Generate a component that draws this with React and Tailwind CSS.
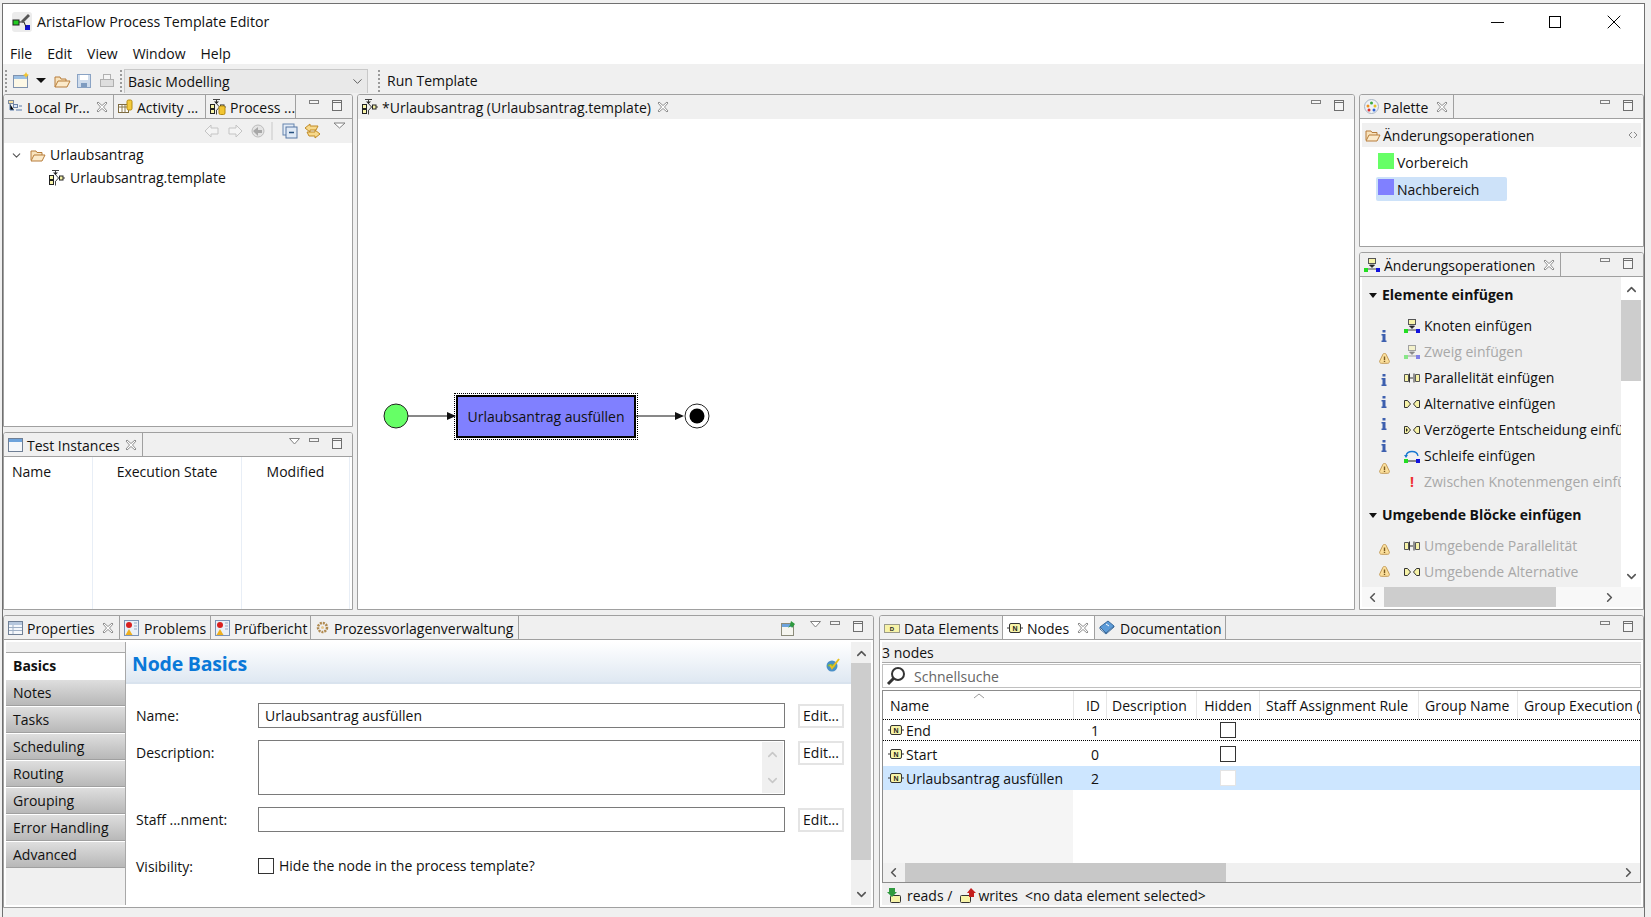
import { ChevronUp, ChevronDown, ChevronLeft, ChevronRight, Minus, X } from "lucide-react"

const COLS = ["w-[191px]", "w-[33px]", "w-[90px]", "w-[63px]", "w-[159px]", "w-[99px]", "flex-1"]

function CloseIcon() {
  return (
    <svg width="12" height="12" viewBox="0 0 12 12" className="shrink-0">
      <path d="M2 1l4 3.5L10 1l1 1-3.5 4L11 10l-1 1-4-3.5L2 11l-1-1 3.5-4L1 2z" fill="#fff" stroke="#8f8f8f" strokeWidth="1" />
    </svg>
  )
}

function MinIcon() {
  return <div className="h-[4px] w-[10px] border border-[#7f7f7f] bg-[#f5f5f5]" />
}

function MaxIcon() {
  return (
    <div className="h-[11px] w-[10px] border border-[#6f6f6f] bg-[#f5f5f5]">
      <div className="h-[2px] border-b border-[#6f6f6f]" />
    </div>
  )
}

function MenuArrow() {
  return (
    <svg width="11" height="7" viewBox="0 0 11 7" className="-mr-[4px]">
      <path d="M.5.5h10L5.500 6z" fill="#fff" stroke="#808080" />
    </svg>
  )
}

function NodeIcon() {
  return (
    <svg width="16" height="12" viewBox="0 0 16 12" className="shrink-0">
      <path d="M0 6h3M13 6h3" stroke="#333" />
      <rect x="2.500" y="1.500" width="11" height="9" rx="1.500" fill="#f7f3a8" stroke="#333" />
      <text x="8" y="9" textAnchor="middle" fontSize="7" fontWeight="700" fontFamily="Liberation Sans" fill="#222">N</text>
    </svg>
  )
}

function ProcIcon({ can }) {
  return (
    <svg width="16" height="16" viewBox="0 0 16 16" className="shrink-0">
      <path d="M3 .5h7M6.500 .5v3M6 4l3.500 4L6 12M6.500 12v3.500M9.500 8h1M14 8h2" stroke="#444" fill="none" />
      <path d="M4 2.500h5L6.500 5z" fill="#222" />
      <rect x=".5" y="5.500" width="4" height="4" fill="#f7f3a8" stroke="#222" />
      <rect x=".5" y="10.500" width="4" height="4" fill="#f7f3a8" stroke="#222" />
      <rect x="10.500" y="6" width="3.500" height="4" fill="#f7f3a8" stroke="#222" />
      {can && <rect x="9" y="7" width="6" height="8.500" rx="1.500" fill="#f2c531" stroke="#b58a10" />}
    </svg>
  )
}

function FolderIcon() {
  return (
    <svg width="16" height="13" viewBox="0 0 16 13" className="shrink-0">
      <path d="M1 11V2h5l1 1.500h5V6" fill="#f8e3bd" stroke="#b77d3a" />
      <path d="M1 12l3-6h11l-3 6z" fill="#fbeacb" stroke="#b77d3a" />
    </svg>
  )
}

function InsertIcon({ faded }) {
  return (
    <svg width="16" height="14" viewBox="0 0 16 14" className={`shrink-0 ${faded ? "opacity-50" : ""}`}>
      <rect x="4.500" y=".5" width="7" height="5" fill="#f7f3a8" stroke="#555" />
      <path d="M5.500 7h5L8 9.500zM3 11h10" fill="#222" stroke="#222" strokeWidth=".8" />
      <rect y="10" width="4" height="4" fill="#22dd22" />
      <rect x="12" y="10" width="4" height="4" fill="#1111dd" />
    </svg>
  )
}

function ParallelIcon() {
  return (
    <svg width="16" height="12" viewBox="0 0 16 12" className="shrink-0">
      <path d="M.5 2.500h4v7h-4zM15.500 2.500h-4v7h4z" fill="#f7f3a8" stroke="#555" />
      <path d="M5.500 1.500v9M10 1.500v9M6 6h3" stroke="#333" />
    </svg>
  )
}

function AltIcon({ dark }) {
  return (
    <svg width="16" height="12" viewBox="0 0 16 12" className="shrink-0">
      <path d="M.5 2.500h3l3 3.500-3 3.500h-3z" fill="#f7f3a8" stroke="#333" />
      <path d="M15.500 2.500h-3l-3 3.500 3 3.500h3z" fill="#f7f3a8" stroke="#333" />
      {dark && <path d="M2 4l2 2-2 2z" fill="#222" />}
    </svg>
  )
}

function LoopIcon() {
  return (
    <svg width="16" height="14" viewBox="0 0 16 14" className="shrink-0">
      <path d="M2 7C3 1 13 1 14 7" fill="none" stroke="#1878d0" strokeWidth="1.300" />
      <path d="M0 6h4L2 9z" fill="#1878d0" />
      <path d="M3 12h10" stroke="#222" />
      <rect y="10" width="4" height="4" fill="#22dd22" />
      <rect x="12" y="10" width="4" height="4" fill="#1111dd" />
    </svg>
  )
}

function InfoMark() {
  return (
    <svg width="6" height="12" viewBox="0 0 6 12">
      <path d="M1.500 0h3v2.500h-3zM.5 4h4v6.500h1V12H.5v-1.500h1V5.500h-1z" fill="#3d5fae" />
    </svg>
  )
}

function WarnMark() {
  return (
    <svg width="11" height="11" viewBox="0 0 11 11">
      <path d="M4 1.200a1.700 1.700 0 0 1 3 0l3.200 6.600c.6 1.200-.2 2.500-1.500 2.500H2.300C1 10.300.2 9 .8 7.800z" fill="#fbdf9c" stroke="#c39b58" />
      <path d="M4.800 3.500h1.400v3.500H4.800zM4.800 7.700h1.400v1.300H4.800z" fill="#7a5a20" />
    </svg>
  )
}

function ReportIcon() {
  return (
    <svg width="15" height="16" viewBox="0 0 15 16" className="shrink-0">
      <rect x=".5" y=".5" width="14" height="15" fill="#eaf0f8" stroke="#7b93b5" />
      <circle cx="5" cy="5" r="3" fill="#d92020" />
      <path d="M5 9l3.500 6h-7z" fill="#f0b020" />
      <path d="M10 3h3M10 6h3M10 9h3" stroke="#9aa9c0" />
    </svg>
  )
}

function PropIcon({ blue }) {
  return (
    <svg width="15" height="14" viewBox="0 0 15 14" className="shrink-0">
      <rect x=".5" y=".5" width="14" height="13" fill="#f4f7fb" stroke="#6f7f95" />
      <rect x="1" y="1" width="13" height="3" fill={blue ? "#6da3dc" : "#b6c7dd"} />
      {!blue && <path d="M1 6.500h13M1 9.500h13M5 4v9" stroke="#9fb0c6" />}
    </svg>
  )
}

function Tab({ icon, label, close, tone = "", w, bare }) {
  return (
    <div className={`flex h-full shrink-0 items-center gap-[4px] pl-[4px] ${bare ? "" : "border-r border-[#a0a0a0]"} ${w} ${tone}`}>
      {icon}
      <span className="translate-y-px whitespace-nowrap">{label}</span>
      {close && <div className="ml-auto mr-[5px]"><CloseIcon /></div>}
    </div>
  )
}

function Strip({ children, actions, line = true }) {
  return (
    <div className={`flex h-[24px] shrink-0 items-stretch bg-[#f0f0f0] ${line ? "border-b border-[#a0a0a0]" : ""}`}>
      {children}
      <div className="ml-auto flex items-start gap-[13px] pr-[10px] pt-[5px]">{actions}</div>
    </div>
  )
}

function Panel({ children, className }) {
  return <div className={`flex flex-col overflow-hidden rounded-t-[3px] border border-[#a0a0a0] bg-white ${className}`}>{children}</div>
}

function LeftPanels() {
  return (
    <div className="flex w-[350px] shrink-0 flex-col gap-[5px]">
      <Panel className="h-[333px]">
        <Strip actions={<><MinIcon /><MaxIcon /></>}>
          <Tab w="w-[110px]" close label="Local Pr..." icon={
            <svg width="15" height="13" viewBox="0 0 15 13" className="shrink-0">
              <rect x=".5" y=".5" width="5" height="3" fill="#f6dfa0" stroke="#7d8aa0" />
              <rect x="5.500" y="4.500" width="4" height="3" fill="#dfe8f4" stroke="#6d83a8" />
              <path d="M2 4v6h4M11 6h3M8 10h6" stroke="#5a7cab" />
            </svg>
          } />
          <Tab w="w-[92px]" label="Activity ..." icon={
            <svg width="15" height="15" viewBox="0 0 15 15" className="shrink-0">
              <rect x=".5" y="5.500" width="10" height="8" fill="#fff" stroke="#7d6a40" />
              <path d="M.5 8h10M4 5.500v8M7 5.500v8" stroke="#8a7a50" />
              <rect x="9" y="1" width="5" height="10" rx="1.500" fill="#f4cb3d" stroke="#b58a10" />
            </svg>
          } />
          <Tab w="w-[90px]" label="Process ..." icon={<ProcIcon can />} />
        </Strip>
        <div className="flex h-[24px] shrink-0 items-center justify-end bg-[#f0f0f0] pr-[7px]">
          <svg width="150" height="20" viewBox="0 0 150 20">
            <path d="M10 10l6-6v3h7v6h-7v3zM41 4l6 6-6 6v-3h-7v-6h7z" fill="#f4f4f4" stroke="#c4c4c4" />
            <circle cx="63" cy="10" r="6" fill="#e4e4e4" stroke="#bcbcbc" />
            <path d="M58 10l5-4v3h4v3h-4v3z" fill="#a8a8a8" />
            <path d="M77 1v18" stroke="#c8c8c8" />
            <rect x="88" y="3" width="11" height="11" fill="#e4ecf6" stroke="#6584ad" />
            <rect x="91" y="6" width="11" height="11" fill="#dfe9f5" stroke="#5677a3" />
            <path d="M94 11.500h5" stroke="#25507f" strokeWidth="1.500" />
            <path d="M110 7l5-4v2h8l-2 4h-6v2zM125 13l-5-4v2h-8l2 4h6v2z" fill="#f7d98c" stroke="#c08a25" />
            <path d="M139 2h11L144.500 7z" fill="#fff" stroke="#808080" />
          </svg>
        </div>
        <div className="flex h-[24px] items-center pl-[6px]">
          <ChevronDown size={13} strokeWidth={2} className="text-[#555]" />
          <div className="ml-[7px]"><FolderIcon /></div>
          <span className="ml-[4px]">Urlaubsantrag</span>
        </div>
        <div className="flex h-[22px] items-center pl-[45px]">
          <ProcIcon />
          <span className="ml-[5px]">Urlaubsantrag.template</span>
        </div>
      </Panel>
      <Panel className="h-[178px]">
        <Strip actions={<><MenuArrow /><MinIcon /><MaxIcon /></>}>
          <Tab w="w-[139px]" close label="Test Instances" icon={<PropIcon blue />} />
        </Strip>
        <div className="flex flex-1">
          <div className="w-[89px] border-r border-[#e8eef6] pl-[8px] pt-[8px]">Name</div>
          <div className="w-[149px] border-r border-[#e8eef6] pt-[8px] text-center">Execution State</div>
          <div className="w-[108px] border-r border-[#e8eef6] pt-[8px] text-center">Modified</div>
        </div>
      </Panel>
    </div>
  )
}

function Editor() {
  return (
    <Panel className="-ml-px h-[516px] w-[998px] shrink-0">
      <Strip line={false} actions={<><MinIcon /><MaxIcon /></>}>
        <Tab w="w-[316px]" close bare tone="pl-[2px]" label="*Urlaubsantrag (Urlaubsantrag.template)" icon={<ProcIcon />} />
      </Strip>
      <div className="relative flex-1 bg-white">
        <svg width="400" height="60" viewBox="0 0 400 60" className="absolute left-[25px] top-[272px]">
          <circle cx="13" cy="25" r="12" fill="#66ff66" stroke="#222" />
          <path d="M25 25h46M253 25h46" stroke="#111" />
          <path d="M73 25l-9-4v8zM301 25l-9-4v8z" fill="#111" />
          <circle cx="314" cy="25" r="12" fill="#fff" stroke="#222" />
          <circle cx="314" cy="25" r="7.500" fill="#000" />
        </svg>
        <div className="absolute left-[96px] top-[274px] border border-dotted border-black p-px">
          <div className="flex h-[43px] w-[180px] items-center justify-center border-[2px] border-black bg-[#8080ff] text-[#111]">Urlaubsantrag ausfüllen</div>
        </div>
      </div>
    </Panel>
  )
}

function OpRow({ icon, label, off }) {
  return (
    <div className={`flex h-[26px] items-center whitespace-nowrap ${off ? "text-[#a8a8a8]" : ""}`}>
      <div className="flex w-[20px] shrink-0 items-center justify-start">{icon}</div>
      <span>{label}</span>
    </div>
  )
}

function Marks({ items, className }) {
  return (
    <div className={`flex w-[16px] flex-col items-center ${className}`}>
      {items.map((m, i) => (
        <div key={i} className="flex h-[22px] items-center justify-center">{m === "i" ? <InfoMark /> : <WarnMark />}</div>
      ))}
    </div>
  )
}

function GroupHead({ label }) {
  return (
    <div className="flex h-[26px] items-center pl-[7px] font-bold">
      <svg width="8" height="5" viewBox="0 0 8 5" className="mr-[5px]"><path d="M0 0h8L4 5z" fill="#111" /></svg>
      {label}
    </div>
  )
}

function RightPanels() {
  return (
    <div className="flex w-[285px] shrink-0 flex-col gap-[5px]">
      <Panel className="h-[153px]">
        <Strip actions={<><MinIcon /><MaxIcon /></>}>
          <Tab w="w-[94px]" close label="Palette" icon={
            <svg width="15" height="15" viewBox="0 0 15 15" className="shrink-0">
              <circle cx="7.500" cy="7.500" r="7" fill="#eef2f6" stroke="#a8b4c4" />
              <circle cx="4" cy="7" r="1.500" fill="#f09020" />
              <circle cx="7.500" cy="4" r="1.500" fill="#3caa3c" />
              <circle cx="11" cy="7" r="1.500" fill="#e8c020" />
              <circle cx="5" cy="11" r="1.500" fill="#d83030" />
              <circle cx="10" cy="11" r="1.500" fill="#3060d0" />
            </svg>
          } />
        </Strip>
        <div className="flex flex-1 flex-col px-[2px] pt-[4px]">
          <div className="flex h-[24px] shrink-0 items-center gap-[2px] bg-[#f0f0f0] pl-[3px]">
            <FolderIcon />
            <span className="translate-y-px">Änderungsoperationen</span>
            <svg width="10" height="8" viewBox="0 0 10 8" className="ml-auto mr-[3px]">
              <path d="M4 1L1 4l3 3M6 1l3 3-3 3" fill="none" stroke="#8a8a8a" />
            </svg>
          </div>
          <div className="ml-[14px] mt-[4px] flex h-[24px] w-[131px] items-center pl-[2px]">
            <div className="h-[16px] w-[16px] -translate-y-[2px] bg-[#66ff66]" />
            <span className="ml-[3px]">Vorbereich</span>
          </div>
          <div className="ml-[14px] mt-[2px] flex h-[24px] w-[131px] items-center rounded-[2px] bg-[#cde2f9] pl-[2px]">
            <div className="h-[16px] w-[16px] -translate-y-[2px] bg-[#8080ff]" />
            <span className="ml-[3px] translate-y-px">Nachbereich</span>
          </div>
        </div>
      </Panel>
      <Panel className="h-[358px]">
        <Strip actions={<><MinIcon /><MaxIcon /></>}>
          <Tab w="w-[201px]" close label="Änderungsoperationen" icon={<InsertIcon />} />
        </Strip>
        <div className="flex min-h-0 flex-1 flex-col px-[2px] pb-[2px]">
          <div className="flex min-h-0 flex-1">
            <div className="w-[259px] overflow-hidden bg-[#f0f0f0] pt-[5px]">
              <GroupHead label="Elemente einfügen" />
              <div className="flex">
                <Marks items={["i", "w", "i", "i", "i", "i", "w"]} className="ml-[14px] mt-[17px]" />
                <div className="ml-[12px] mt-[5px] min-w-0 flex-1 overflow-hidden">
                  <OpRow icon={<InsertIcon />} label="Knoten einfügen" />
                  <OpRow icon={<InsertIcon faded />} label="Zweig einfügen" off />
                  <OpRow icon={<ParallelIcon />} label="Parallelität einfügen" />
                  <OpRow icon={<AltIcon />} label="Alternative einfügen" />
                  <OpRow icon={<AltIcon dark />} label="Verzögerte Entscheidung einfügen" />
                  <OpRow icon={<LoopIcon />} label="Schleife einfügen" />
                  <OpRow icon={<span className="w-[16px] text-center font-bold text-[#ee3030]">!</span>} label="Zwischen Knotenmengen einfügen" off />
                </div>
              </div>
              <div className="mt-[7px]"><GroupHead label="Umgebende Blöcke einfügen" /></div>
              <div className="flex">
                <Marks items={["w", "w"]} className="ml-[14px] mt-[10px]" />
                <div className="ml-[12px] mt-[5px] min-w-0 flex-1 overflow-hidden">
                  <OpRow icon={<ParallelIcon />} label="Umgebende Parallelität" off />
                  <OpRow icon={<AltIcon />} label="Umgebende Alternative" off />
                </div>
              </div>
            </div>
            <div className="flex w-[20px] shrink-0 flex-col items-center bg-white">
              <ChevronUp size={15} strokeWidth={2.500} className="mt-[5px] h-[15px] shrink-0 text-[#555]" />
              <div className="mt-[3px] h-[81px] w-full bg-[#cdcdcd]" />
              <ChevronDown size={15} strokeWidth={2.500} className="mb-[3px] mt-auto text-[#555]" />
            </div>
          </div>
          <div className="flex h-[20px] shrink-0 items-center bg-[#f8f8f8]">
            <ChevronLeft size={15} strokeWidth={2.500} className="ml-[3px] text-[#555]" />
            <div className="ml-[4px] h-full w-[172px] bg-[#cdcdcd]" />
            <ChevronRight size={15} strokeWidth={2.500} className="ml-[46px] text-[#555]" />
          </div>
        </div>
      </Panel>
    </div>
  )
}

function SideTab({ label, active }) {
  if (active) {
    return <div className="flex h-[27px] items-center border-t border-[#a8a8a8] bg-white pl-[7px] font-bold">{label}</div>
  }
  return (
    <div className="flex h-[27px] items-center border-y border-[#a0a0a0] border-t-[#fff] bg-linear-to-b from-[#dedede] to-[#b8b8b8] pl-[7px]">{label}</div>
  )
}

function EditBtn({ className = "" }) {
  return (
    <div className={`ml-[13px] flex h-[24px] w-[46px] shrink-0 items-center justify-center border-2 border-[#e4e4e4] bg-white ${className}`}>Edit...</div>
  )
}

function FieldBox({ className, children }) {
  return <div className={`w-[527px] shrink-0 border border-[#7a7a7a] bg-white ${className}`}>{children}</div>
}

function Properties() {
  return (
    <Panel className="h-[293px] w-[871px] shrink-0">
      <Strip actions={
        <>
          <svg width="16" height="16" viewBox="0 0 16 16" className="-mt-[1px]">
            <rect x=".5" y="3.500" width="12" height="12" fill="#f5f5ef" stroke="#8b8b7a" />
            <rect x="1" y="4" width="11" height="3" fill="#6da3dc" />
            <path d="M10 1l4 3-3 4-1-2-3 2 2-3z" fill="#2f9a3f" />
          </svg>
          <MenuArrow /><MinIcon /><MaxIcon />
        </>
      }>
        <Tab w="w-[116px]" close label="Properties" icon={<PropIcon />} />
        <Tab w="w-[91px]" tone="gap-[5px]" label="Problems" icon={<ReportIcon />} />
        <Tab w="w-[100px]" label="Prüfbericht" icon={<ReportIcon />} />
        <Tab w="w-[208px]" label="Prozessvorlagenverwaltung" icon={
          <svg width="15" height="15" viewBox="0 0 15 15" className="shrink-0">
            <circle cx="7.500" cy="7.500" r="4.500" fill="none" stroke="#b08a50" strokeWidth="2.500" strokeDasharray="2 1" />
            <circle cx="7.500" cy="7.500" r="1.500" fill="#e8c890" />
          </svg>
        } />
      </Strip>
      <div className="flex min-h-0 flex-1 p-[2px]">
        <div className="flex w-[120px] shrink-0 flex-col border-r border-[#a8a8a8] bg-[#f0f0f0] pt-[10px]">
          <SideTab label="Basics" active />
          {["Notes", "Tasks", "Scheduling", "Routing", "Grouping", "Error Handling", "Advanced"].map((t) => <SideTab key={t} label={t} />)}
        </div>
        <div className="min-w-0 flex-1">
          <div className="flex h-[42px] items-center justify-between border-b-2 border-[#d9e3ee] bg-linear-to-b from-white to-[#dfe8f2] px-[6px]">
            <span className="translate-y-[2px] text-[19.500px] font-bold tracking-[-0.2px] text-[#0a78d8]">Node Basics</span>
            <svg width="15" height="14" viewBox="0 0 15 14" className="mr-[4px] mt-[6px]">
              <circle cx="6" cy="8" r="5.500" fill="#4a90c8" />
              <path d="M2 8c2-2 5-1 7 1" stroke="#7ab648" strokeWidth="2" fill="none" />
              <path d="M4 7l2 3 7-9" stroke="#e8c020" strokeWidth="2" fill="none" />
            </svg>
          </div>
          <div className="flex flex-col pl-[10px] pt-[19px]">
            <div className="flex h-[25px] items-center">
              <span className="w-[122px] shrink-0">Name:</span>
              <FieldBox className="flex h-[25px] items-center pl-[6px]">Urlaubsantrag ausfüllen</FieldBox>
              <EditBtn />
            </div>
            <div className="mt-[12px] flex h-[55px] items-start">
              <span className="mt-[6px] w-[122px] shrink-0">Description:</span>
              <FieldBox className="flex h-[55px] justify-end">
                <div className="my-[1px] mr-[1px] flex w-[21px] flex-col items-center justify-between bg-[#f0f0f0] py-[5px]">
                  <ChevronUp size={15} strokeWidth={2.500} className="text-[#c8c8c8]" />
                  <ChevronDown size={15} strokeWidth={2.500} className="text-[#c8c8c8]" />
                </div>
              </FieldBox>
              <EditBtn className="translate-y-px" />
            </div>
            <div className="mt-[12px] flex h-[25px] items-center">
              <span className="w-[122px] shrink-0 whitespace-nowrap">Staff ...nment:</span>
              <FieldBox className="h-[25px]" />
              <EditBtn />
            </div>
            <div className="mt-[24px] flex h-[20px] items-center">
              <span className="mt-[1px] w-[122px] shrink-0">Visibility:</span>
              <div className="h-[16px] w-[16px] border border-[#333] bg-white" />
              <span className="ml-[5px]">Hide the node in the process template?</span>
            </div>
          </div>
        </div>
        <div className="flex w-[20px] shrink-0 flex-col items-center bg-[#f0f0f0]">
          <ChevronUp size={15} strokeWidth={2.500} className="mt-[4px] shrink-0 text-[#555]" />
          <div className="mt-[2px] h-[197px] w-full bg-[#cdcdcd]" />
          <ChevronDown size={15} strokeWidth={2.500} className="mb-[3px] mt-auto text-[#555]" />
        </div>
      </div>
    </Panel>
  )
}

function Cells({ name, id, line }) {
  return (
    <>
      <div className={`flex items-center gap-[2px] pl-[5px] ${COLS[0]}`}>
        <NodeIcon />
        <span className="translate-y-px">{name}</span>
      </div>
      <div className={`flex translate-y-px items-center justify-center pl-[9px] ${COLS[1]}`}>{id}</div>
      <div className={COLS[2]} />
      <div className={`flex items-center justify-center pr-[2px] ${COLS[3]}`}>
        <div className={`h-[16px] w-[16px] border ${line ? "border-[#333]" : "border-[#e4e4e4]"} bg-white`} />
      </div>
    </>
  )
}

function Nodes() {
  const head = [["Name", "pl-[7px]"], ["ID", "justify-end pr-[6px]"], ["Description", "pl-[5px]"], ["Hidden", "justify-center"], ["Staff Assignment Rule", "pl-[6px]"], ["Group Name", "pl-[6px]"], ["Group Execution (", "pl-[6px]"]]
  return (
    <Panel className="h-[293px] w-[765px] shrink-0">
      <Strip actions={<><MinIcon /><MaxIcon /></>}>
        <Tab w="w-[123px]" label="Data Elements" icon={
          <svg width="16" height="12" viewBox="0 0 16 12" className="shrink-0">
            <rect x=".5" y="2.500" width="15" height="8" fill="#f7f3a8" stroke="#444" strokeDasharray="1 1" />
            <text x="8" y="9" textAnchor="middle" fontSize="6" fontWeight="700" fontFamily="Liberation Sans" fill="#222">D</text>
          </svg>
        } />
        <Tab w="w-[92px]" close tone="bg-white" label="Nodes" icon={<NodeIcon />} />
        <Tab w="w-[131px]" tone="gap-[5px]" label="Documentation" icon={
          <svg width="16" height="15" viewBox="0 0 16 15" className="shrink-0">
            <path d="M1 7l8-6 6 5-8 7z" fill="#5c9bd8" stroke="#3a6a9c" />
            <path d="M1 7v2l6 5 8-7V6" fill="none" stroke="#3a6a9c" />
            <path d="M7 4l3 2" stroke="#fff" />
          </svg>
        } />
      </Strip>
      <div className="flex min-h-0 flex-1 flex-col px-[2px] pb-[2px]">
        <div className="mt-[2px] flex h-[21px] shrink-0 items-center border-b border-[#a8a8a8] bg-[#f0f0f0] pt-[2px]">3 nodes</div>
        <div className="mt-[1px] flex h-[24px] shrink-0 items-center border border-[#c0c0c0] bg-white pl-[3px]">
          <svg width="20" height="20" viewBox="0 0 20 20">
            <circle cx="12" cy="8" r="6" fill="none" stroke="#333" strokeWidth="2" />
            <path d="M7.500 12.500L2 18" stroke="#333" strokeWidth="3" />
          </svg>
          <span className="ml-[8px] translate-y-px text-[#666]">Schnellsuche</span>
        </div>
        <div className="mt-[2px] flex min-h-0 flex-1 flex-col border border-[#8c8c8c] bg-white">
          <div className="relative flex h-[28px] shrink-0">
            {head.map(([t, c], i) => (
              <div key={t} className={`flex items-center overflow-hidden whitespace-nowrap ${i < 6 ? "border-r border-[#e6e6e6]" : ""} ${COLS[i]} ${c}`}>
                <span className="translate-y-px">{t}</span>
              </div>
            ))}
            <svg width="10" height="6" viewBox="0 0 10 6" className="absolute left-[91px] top-[2px]">
              <path d="M0 5l5-4 5 4" fill="none" stroke="#9a9a9a" />
            </svg>
          </div>
          <div className="flex h-[22px] border-y border-dotted border-black">
            <Cells name="End" id="1" line />
          </div>
          <div className="flex h-[25px]"><Cells name="Start" id="0" line /></div>
          <div className="flex h-[24px] bg-[#cde6ff]"><Cells name="Urlaubsantrag ausfüllen" id="2" /></div>
          <div className="flex-1"><div className="h-full w-[190px] bg-[#f5f5f5]" /></div>
          <div className="flex h-[19px] shrink-0 items-center bg-[#f0f0f0]">
            <ChevronLeft size={15} strokeWidth={2.500} className="ml-[3px] text-[#555]" />
            <div className="ml-[4px] h-full w-[321px] bg-[#c8c8c8]" />
            <ChevronRight size={15} strokeWidth={2.500} className="ml-auto mr-[4px] text-[#555]" />
          </div>
        </div>
        <div className="flex h-[22px] shrink-0 items-center bg-[#f0f0f0] pl-[5px] pt-[3px]">
          <svg width="16" height="16" viewBox="0 0 16 16">
            <rect x="3.500" y="7.500" width="10" height="7" rx="1" fill="#f7f3a8" stroke="#333" />
            <path d="M2 0h6v4h2L5 9 0 4h2z" fill="#2f9a3f" />
          </svg>
          <span className="ml-[4px]">reads /</span>
          <svg width="16" height="16" viewBox="0 0 16 16" className="ml-[8px]">
            <rect x=".5" y="7.500" width="10" height="7" rx="1" fill="#f7f3a8" stroke="#333" />
            <path d="M11 0l5 5h-2v4H9V5H7z" fill="#c41e1e" />
          </svg>
          <span className="ml-[2px]">writes</span>
          <span className="ml-[7px]">{"<no data element selected>"}</span>
        </div>
      </div>
    </Panel>
  )
}

function Grip() {
  return <div className="h-[22px] w-[2px] shrink-0 border-l-2 border-dotted border-[#9a9a9a]" />
}

export default function App() {
  return (
    <div className="h-[917px] w-[1651px] overflow-hidden bg-[#f0f0f0] pl-[2px] pr-[6px] pt-[3px] font-['Open_Sans',sans-serif] text-[14px] leading-none text-[#111]">
      <div className="flex h-[914px] flex-col border-x border-t border-[#707070] bg-[#f0f0f0]">
        <div className="flex h-[36px] shrink-0 items-center bg-white pl-[9px]">
          <svg width="20" height="20" viewBox="0 0 20 20">
            <rect width="20" height="20" rx="3" fill="#ececec" />
            <rect x="1" y="8" width="6" height="5" fill="#22cc22" stroke="#222" />
            <rect x="13" y="13" width="5" height="5" fill="#1111cc" />
            <path d="M7 10h5l2 5" stroke="#222" fill="none" />
            <path d="M9 9l7-7 2 2-7 7z" fill="#555" />
          </svg>
          <span className="ml-[5px] text-[14.200px]">AristaFlow Process Template Editor</span>
          <div className="ml-auto flex items-center">
            <Minus size={21} strokeWidth={1.100} className="mr-[41px] text-black" />
            <div className="mr-[41px] h-[12px] w-[12px] border border-black" />
            <X size={24} strokeWidth={1} className="mr-[18px] text-black" />
          </div>
        </div>
        <div className="flex h-[24px] shrink-0 items-center gap-[15px] bg-white pl-[7px] pt-[4px]">
          {["File", "Edit", "View", "Window", "Help"].map((m) => <span key={m}>{m}</span>)}
        </div>
        <div className="flex h-[30px] shrink-0 items-center pl-[2px] pt-[3px]">
          <Grip />
          <svg width="108" height="18" viewBox="0 0 108 18" className="ml-[6px]">
            <rect x=".5" y="3.500" width="14" height="12" fill="#fdf8e6" stroke="#8093ae" />
            <rect x="1" y="4" width="13" height="3" fill="#9bbfe3" />
            <path d="M13 0l1 2 2 1-2 1-1 2-1-2-2-1 2-1z" fill="#f2c531" />
            <path d="M23 6h10l-5 5z" fill="#111" />
            <path d="M42 15V5h5l1 2h5v2" fill="#f8e3bd" stroke="#b77d3a" />
            <path d="M42 15l3-6h12l-3 6z" fill="#fbeacb" stroke="#b77d3a" />
            <rect x="64.500" y="2.500" width="13" height="13" fill="#cfdcec" stroke="#8aa3c4" />
            <rect x="67" y="3" width="8" height="5" fill="#fff" />
            <rect x="68" y="11" width="6" height="4" fill="#7f9cc0" />
            <rect x="87.500" y="7.500" width="13" height="7" fill="#dedede" stroke="#b0b0b0" />
            <rect x="90.500" y="2.500" width="7" height="5" fill="#f4f4f4" stroke="#b0b0b0" />
          </svg>
          <div className="-ml-[1px]"><Grip /></div>
          <div className="ml-[2px] flex h-[24px] w-[244px] items-center justify-between border border-b-0 border-[#c8c8c8] bg-[#e9e9e9] pl-[3px] pr-[2px]">
            <span className="translate-y-px">Basic Modelling</span>
            <ChevronDown size={15} strokeWidth={1.500} className="text-[#555]" />
          </div>
          <div className="ml-[10px]"><Grip /></div>
          <span className="ml-[7px]">Run Template</span>
        </div>
        <div className="flex shrink-0 gap-[5px]">
          <LeftPanels />
          <Editor />
          <div className="-ml-px"><RightPanels /></div>
        </div>
        <div className="mt-[5px] flex shrink-0 gap-[5px]">
          <Properties />
          <Nodes />
        </div>
      </div>
    </div>
  )
}
